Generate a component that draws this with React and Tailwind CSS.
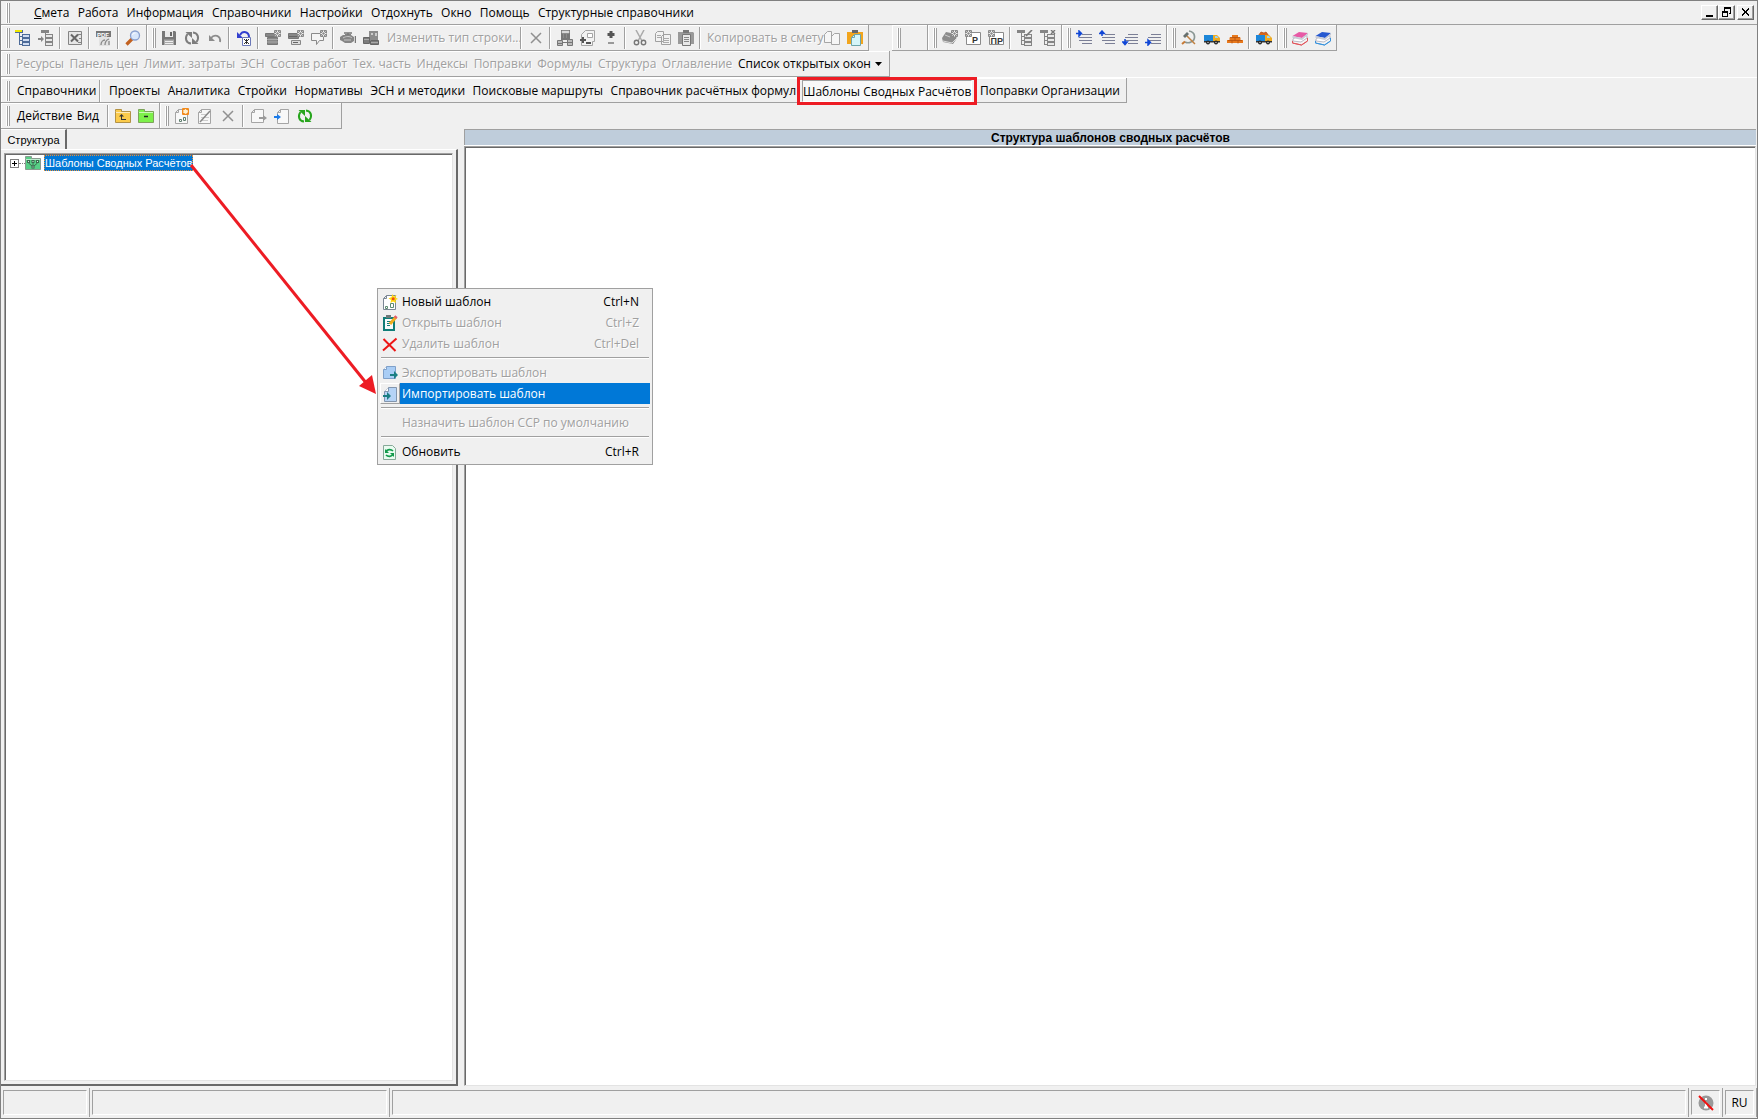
import { clsx } from "clsx";

const G = "#858585";

const Svg = ({ children, size = 16 }) => (
  <svg width={size} height={size} viewBox="0 0 16 16" fill="none" className="shrink-0">
    {children}
  </svg>
);

const TreeLines = ({ head = G, line = G, fill = "#e8e8e8", x = 0 }) => (
  <g shapeRendering="crispEdges">
    <rect x={x} y="0" width="8" height="3" fill={line} />
    <rect x={x} y="0" width="7" height="2" fill={head} />
    <path d={`M${x + 4}.5 3V14.500H8M${x + 4}.5 6.500H8M${x + 4}.5 10.500H8`} stroke={line} />
    <path d="M7.500 4.500h7v3h-7zM7.500 8.500h7v3h-7zM7.500 12.500h7v3h-7z" stroke={line} fill={fill} />
  </g>
);

const Gear = ({ x = 8, y = 0, color = "#8a8a8a" }) => (
  <g transform={`translate(${x} ${y})`}>
    <rect width="7" height="7" rx="1" fill={color} />
    <path d="M3.5 0.5v6M.5 3.5h6M1.5 1.5l4 4M5.5 1.5l-4 4" stroke="#fff" strokeWidth=".9" />
    <circle cx="3.5" cy="3.5" r="1.2" fill={color} />
  </g>
);

const Page = ({ stroke = "#a5a5a5", fill = "#f8f8f8" }) => (
  <path d="M1.500 4.500l3-3h9v14h-12zM1.500 4.500h3v-3" stroke={stroke} fill={fill} />
);

const Lines = () => (
  <path d="M6 4.500h10M3 7.500h13M3 10.500h13M6 13.500h10" stroke="#7b7f96" shapeRendering="crispEdges" />
);

const Books = ({ top, edge }) => (
  <>
    <path d="M0.5 11l6-4 9 1v3l-6 4-9-2z" fill="#f4f4f4" stroke={edge} />
    <path d="M1 9l6-4 8 1v2l-6 4-8-1z" fill="#fff" stroke="#b9b9c4" />
    <path d="M.5 6L7 2l9 1-6 5z" fill={top} />
    <path d="M.5 6l9.500 2L16 3v2l-6 5-9.500-2z" fill="#c9ccd6" />
    <path d="M.5 13l9 2 6-4" stroke={edge} />
  </>
);

const Truck = ({ load }) => (
  <>
    {load && <path d="M2 6l3-4 3 1 2-1 3 4z" fill="#d9661a" stroke="#a84812" strokeWidth=".7" />}
    <path d="M0 5h9v6H0z" fill="#1c86d8" />
    <path d="M9 5h4l3 3v4H9z" fill="#f0ab20" />
    <path d="M11 6h2l1.500 2H11z" fill="#9bd5f5" />
    <path d="M0 11h16v1.500H0z" fill="#333" />
    <circle cx="4" cy="12.500" r="2" fill="#222" />
    <circle cx="12" cy="12.500" r="2" fill="#222" />
    <circle cx="4" cy="12.500" r=".7" fill="#ddd" />
    <circle cx="12" cy="12.500" r=".7" fill="#ddd" />
  </>
);

const Cycle = ({ color }) => (
  <>
    <path d="M7 13.500C2 13 .5 8 3.500 4M9 2.500c5 .5 6.500 5.500 3.500 9.500" stroke={color} strokeWidth="2" />
    <path d="M1.500 2H8v6zM14.500 14H8V8z" fill={color} />
  </>
);

const Folder = ({ fill, edge, children }) => (
  <>
    <path d="M.5 3.500v-2h6v2h9v11H.5z" fill={fill} stroke={edge} />
    <path d="M1 4.500h14" stroke="#fff" opacity=".6" />
    {children}
  </>
);

const icons = {
  treeYellow: <TreeLines head="#efe900" line="#4d6b98" fill="#cfdcf2" />,
  treeInsert: (
    <>
      <TreeLines x={3} />
      <path d="M0 8h3V6l3 3-3 3v-2H0z" fill={G} />
    </>
  ),
  excel: (
    <>
      <path d="M1.500 1.500h13v13h-13z" fill="#e6e6e6" stroke={G} />
      <path d="M4 4.500l7 7M11 4.500l-7 7" stroke="#666" strokeWidth="2" />
      <path d="M11 4.500h3M12 8.500h2M11 12.500h3" stroke={G} />
    </>
  ),
  pdf: (
    <>
      <path d="M3 5h11v11H3z" fill="#e2e2e2" />
      <path d="M0 1h15v6H0z" fill="#777" />
      <text x="1" y="6.500" fontSize="6" fontWeight="700" fill="#fff" fontFamily="Liberation Sans, sans-serif">PDF</text>
      <path d="M5 15c0-3 2-5 4-5M9 15c0-3 1-5 4-6M13 15v-4" stroke="#888" strokeWidth="1.300" />
    </>
  ),
  search: (
    <>
      <path d="M1.500 14.500L7 9" stroke="#c2611f" strokeWidth="3.200" />
      <circle cx="10" cy="5.500" r="4.500" fill="#d8e6fb" stroke="#8aa0cf" strokeWidth="1.300" />
      <path d="M7.500 5c.5-1.500 1.500-2 3-2" stroke="#fff" />
    </>
  ),
  save: (
    <>
      <path d="M1 1h13l1 1v13H1z" fill="#777" />
      <path d="M4 1h8v6H4z" fill="#e9e9e9" />
      <path d="M9 2h2v4H9z" fill="#666" />
      <path d="M3 9.500h10V15H3z" fill="#aaa" />
      <path d="M4 11.500h8M4 13.500h8" stroke="#eee" />
    </>
  ),
  cycleGray: <Cycle color="#7d7d7d" />,
  cycleGreen: <Cycle color="#27a51d" />,
  undo: (
    <>
      <path d="M4 8c3-4 10-3 9 4" stroke="#8c8c8c" strokeWidth="1.800" />
      <path d="M2 5v6h6z" fill="#8c8c8c" />
    </>
  ),
  undoLock: (
    <>
      <path d="M4 5c3-5 9-3 9 2" stroke="#3340cf" strokeWidth="2" />
      <path d="M1 2v6h6z" fill="#3340cf" />
      <path d="M6.500 7.500h8v8h-8z" fill="#fff" stroke="#6b78b8" />
      <path d="M8 9l5 5M13 9l-5 5M10.500 9v5" stroke="#333" />
    </>
  ),
  rowsGear: (
    <>
      <path d="M.5 3.500h10v3H.5zM2.500 7.500h10v7h-10z" fill="#888" stroke="#777" />
      <path d="M2 9.500h11M2 12h11" stroke="#aaa" />
      <Gear x={9} />
    </>
  ),
  rowsGear2: (
    <>
      <path d="M.5 3.500h10v5H.5z" fill="#888" stroke="#777" />
      <path d="M3.500 10.500h9v4h-9z" fill="#ddd" stroke="#888" />
      <path d="M1 6.500h9M5 12.500h5" stroke="#666" />
      <Gear x={9} />
    </>
  ),
  chatGear: (
    <>
      <path d="M.5 3.500h12v7h-4l-3 4v-4h-5z" fill="#f4f4f4" stroke="#8a8a8a" />
      <Gear x={9} />
    </>
  ),
  engine: (
    <>
      <path d="M0 7l3-2h2V4h6v1l3 2v4l-3 2H5l-3-2-2-1z" fill="#858585" />
      <path d="M4 3h8M8 3v2M15.500 6v7" stroke="#777" strokeWidth="1.500" />
      <path d="M3 8c3-2 7-2 9 0M4 10h7" stroke="#c5c5c5" />
    </>
  ),
  blocks: (
    <>
      <path d="M6 1h9v9H6z" fill="#8b8b8b" />
      <path d="M.5 7.500h6v6h-6zM7.500 10.500h8v4h-8z" fill="#7c7c7c" stroke="#666" />
      <path d="M8 3h2v2H8zM12 3h2v3h-2z" fill="#ccc" />
      <path d="M1 9.500h5M8 12.500h7" stroke="#aaa" />
    </>
  ),
  cross: <path d="M3 3l10 10M13 3L3 13" stroke="#909090" strokeWidth="1.500" />,
  calc: (
    <>
      <path d="M4 0h9v10H4z" fill="#777" />
      <path d="M5 1h7v2H5zM6 5h1M9 5h1M6 7h1M9 7h1" fill="#ddd" stroke="#ccc" strokeWidth=".5" />
      <path d="M.5 10.500h5v5h-5zM10.500 9.500h5v6h-5z" fill="#bbb" stroke="#777" />
      <path d="M1 13.500h4M11 12.500h4M5 12.500h5" stroke="#777" />
    </>
  ),
  pagePlus: (
    <>
      <path d="M1.500 4.500l4-4h9v11h-2v4h-11z" fill="#f2f2f2" stroke="#a5a5a5" />
      <path d="M7.500 3.500h5v4h-5z" fill="#fff" stroke="#a5a5a5" />
      <path d="M0 10h6M3 7v6M6 13h5" stroke="#555" strokeWidth="2" />
    </>
  ),
  plusMinus: (
    <>
      <path d="M8 1v7M4.500 4.500h7" stroke="#555" strokeWidth="3" />
      <path d="M5 13h6" stroke="#999" strokeWidth="2" />
    </>
  ),
  scissors: (
    <>
      <path d="M4 0l6 11M12 0L6 11" stroke="#aaa" strokeWidth="1.500" />
      <circle cx="4.500" cy="12.500" r="2.200" stroke="#777" strokeWidth="1.400" />
      <circle cx="11.500" cy="12.500" r="2.200" stroke="#777" strokeWidth="1.400" />
    </>
  ),
  copy: (
    <>
      <path d="M.5 3.500l2-2h6v10h-8zM6.500 6.500l2-2h7v10h-9z" fill="#f2f2f2" stroke="#a0a0a0" />
      <path d="M2 5.500h4M2 7.500h4M8 8.500h6M8 10.500h6M8 12.500h6" stroke="#aaa" />
    </>
  ),
  copyLight: (
    <path d="M.5 4.500l3-3h4v11h-7zM7.500 6.500l3-3h5v11h-8z" fill="#f6f6f6" stroke="#a5a5a5" />
  ),
  pasteGray: (
    <>
      <path d="M0 2h15l1 1v11H0z" fill="#9a9a9a" />
      <path d="M4.500 4.500h8v11h-8z" fill="#e8e8e8" stroke="#777" />
      <path d="M5 0h6v3H5z" fill="#777" />
      <path d="M6 7.500h5M6 9.500h5M6 11.500h5" stroke="#888" />
    </>
  ),
  pasteColor: (
    <>
      <path d="M0 2h16v12H0z" fill="#f2a51d" />
      <path d="M5 0h6v3H5z" fill="#666" />
      <path d="M4.500 7.500l3-3h6v11h-9z" fill="#d5f5f8" stroke="#6ca5aa" />
      <path d="M4.500 7.500h3v-3" stroke="#6ca5aa" />
    </>
  ),
  stackGear: (
    <>
      <path d="M0 8l4-6 5 1 6 5-4 6-10-2z" fill="#8c8c8c" />
      <path d="M1 11l9 2 5-5" stroke="#ddd" />
      <path d="M3 5l5 2" stroke="#ccc" />
      <Gear x={9} />
    </>
  ),
  boxR: (
    <>
      <path d="M1.500 2.500h14v12h-14z" fill="#fff" stroke="#8b8b8b" />
      <Gear x={0} />
      <text x="7" y="13" fontSize="9" fontWeight="700" fill="#333" fontFamily="Liberation Sans, sans-serif">Р</text>
    </>
  ),
  boxPR: (
    <>
      <path d="M1.500 2.500h14v12h-14z" fill="#fff" stroke="#8b8b8b" />
      <Gear x={0} />
      <text x="2.500" y="13.500" fontSize="9" fontWeight="700" fill="#333" fontFamily="Liberation Sans, sans-serif">ПР</text>
    </>
  ),
  treeEdit: (
    <>
      <TreeLines />
      <path d="M9 6l6-6" stroke="#777" strokeWidth="1.600" />
    </>
  ),
  treeDelete: (
    <>
      <TreeLines />
      <path d="M11 0l4 4M15 0l-4 4" stroke="#777" strokeWidth="1.400" />
    </>
  ),
  lineRightUp: (
    <>
      <Lines />
      <path d="M0 3.500h3M3 1v5l2.500-2.500z" stroke="#1147d6" strokeWidth="1.500" fill="#1147d6" />
    </>
  ),
  lineUp: (
    <>
      <Lines />
      <path d="M3 6V3M.8 3.500L3 1l2.200 2.500z" stroke="#1147d6" strokeWidth="1.500" fill="#1147d6" />
    </>
  ),
  lineDown: (
    <>
      <Lines />
      <path d="M3 9v3M.8 12L3 14.500 5.200 12z" stroke="#1147d6" strokeWidth="1.500" fill="#1147d6" />
    </>
  ),
  lineRight: (
    <>
      <Lines />
      <path d="M0 12.500h3M3 10v5l2.500-2.500z" stroke="#1147d6" strokeWidth="1.500" fill="#1147d6" />
    </>
  ),
  hammer: (
    <>
      <path d="M8 1c7 1 7 9 2 11-2 1-4 1-6 0" stroke="#8a9794" strokeWidth="1.700" />
      <path d="M1 14l3-2.500" stroke="#c77a35" strokeWidth="2" />
      <path d="M5 5l9 9" stroke="#c08040" strokeWidth="1.500" />
      <path d="M2 6l4-4 2 2-4 4z" fill="#66706f" />
    </>
  ),
  truck: <Truck />,
  truckLoad: <Truck load />,
  bricks: (
    <>
      <path d="M5 5h6v3H5zM2.500 7.500h11v3h-11zM0 10h16v3H0z" fill="#e8791c" />
      <path d="M3 7.500h10M1 10.500h14M5 10.500v3M11 10.500v3M8 7.500v3" stroke="#b3500f" strokeWidth=".8" />
    </>
  ),
  booksPink: <Books top="#e75aa6" edge="#e0555c" />,
  booksBlue: <Books top="#2759d0" edge="#3a93dc" />,
  folderUp: (
    <Folder fill="#fbcb4b" edge="#b39245">
      <path d="M6 11.500h5M6.500 7v5" stroke="#333" />
      <path d="M4 8.500L6.500 6 9 8.500z" fill="#333" />
    </Folder>
  ),
  folderMinus: (
    <Folder fill="#7df04a" edge="#7da35a">
      <path d="M6 8.500h4" stroke="#222" strokeWidth="1.500" />
    </Folder>
  ),
  pageNew: (
    <>
      <Page />
      <path d="M5.500 11.500h2v2h-2zM9.500 9.500h2v3h-2z" stroke="#5f7f6f" />
      <rect x="8" y="0" width="7" height="7" rx="1" fill="#f18a1c" />
      <circle cx="11.500" cy="3.500" r="2" fill="#fff1c9" stroke="#fff" strokeDasharray="1 1" />
    </>
  ),
  pageEdit: (
    <>
      <Page />
      <path d="M4 6.500h6M4 9.500h8M4 12.500h7" stroke="#ccc" />
      <path d="M3 14L13 3" stroke="#888" strokeWidth="1.500" />
    </>
  ),
  pageOut: (
    <>
      <path d="M.5 4.500l3-3h9v13H.5zM.5 4.500h3v-3" stroke="#a5a5a5" fill="#f8f8f8" />
      <path d="M8 9h4V7l4 3-4 3v-2H8z" fill="#9a9a9a" />
    </>
  ),
  pageIn: (
    <>
      <path d="M3.500 4.500l3-3h8v14h-11zM3.500 4.500h3v-3" stroke="#a5a5a5" fill="#f8f8f8" />
      <path d="M0 8h3V6l4 3-4 3v-2H0z" fill="#1c7be8" />
    </>
  ),
  tree: (
    <Folder fill="#57cf86" edge="#8a9a90">
      <path d="M2 5h3v3H2zM6.500 5h3v3h-3zM11 5h3v3h-3zM6.500 10.500h3v3h-3z" fill="#3d6a50" />
      <path d="M3.500 8L7 11M12.500 8L9 11M8 8v3" stroke="#3d6a50" />
      <path d="M3 6h1v1H3zM7.500 6h1v1h-1zM12 6h1v1h-1zM7.500 11.500h1v1h-1z" fill="#c9f2d8" />
    </Folder>
  ),
  menuNew: (
    <>
      <Page stroke="#7b8794" fill="#fff" />
      <path d="M3.500 12.500h2v2h-2zM8.500 9.500h3v4h-3z" stroke="#5d8a70" />
      <path d="M10.500 0l1.300 2.500L14.500 1 13.500 3.500 16 5l-2.500 1 .5 3-3-1.500L8.500 9l.5-3L6.500 4.500 9.500 3z" fill="#ffd911" />
      <circle cx="11.200" cy="4.700" r="1.500" fill="#ee4a15" />
    </>
  ),
  menuOpen: (
    <>
      <path d="M1 2h12v14H1z" fill="#0f7d78" />
      <path d="M4 0h5v3H4z" fill="#6c7a7a" />
      <path d="M3 4h8v10H3z" fill="#f7fbfb" />
      <path d="M5 6.500h4M5 8.500h4M5 10.500h3" stroke="#0f7d78" />
      <path d="M8 9l6-7" stroke="#f1ae1d" strokeWidth="3" />
      <path d="M13 3l1.500-1.800" stroke="#e65c6c" strokeWidth="3" />
    </>
  ),
  menuDelete: <path d="M1.500 3l12 12M14.500 2.500L1 14.500" stroke="#ed1515" strokeWidth="2" />,
  menuExport: (
    <>
      <path d="M1.500 4.500l3-3h9v12h-12z" fill="#a9cdf5" stroke="#7fa0c9" />
      <path d="M1.500 4.500h3v-3" fill="#fff" stroke="#7fa0c9" />
      <path d="M8 9h4V6l4 4-4 4v-3H8z" fill="#1c7f83" />
    </>
  ),
  menuImport: (
    <>
      <path d="M2.500 5.500l4-4h8v14h-12z" fill="#b5d3f6" stroke="#8295ad" />
      <path d="M2.500 5.500h4v-4" fill="#fff" stroke="#8295ad" />
      <path d="M1 9h4V6l4 4-4 4v-3H1z" fill="#1c7f83" />
    </>
  ),
  menuRefresh: (
    <>
      <path d="M1.500 1.500h9l3 3v11h-12z" fill="#e9fbf0" stroke="#86a998" />
      <path d="M4 8c1-3 5-3 7-1M11 10c-1 3-5 3-7 1" stroke="#139a4b" strokeWidth="1.700" />
      <path d="M3 5v4h4zM12 13V9H8z" fill="#139a4b" />
    </>
  ),
};

const Grip = () => (
  <span className="mr-px flex h-5 w-1 shrink-0 justify-between">
    <span className="w-0.5 border-x border-l-white border-r-[#a0a0a0]" />
    <span className="w-0.5 border-x border-l-white border-r-[#a0a0a0]" />
  </span>
);

const Sep = () => (
  <span className="flex h-[22px] w-1.5 shrink-0 justify-center">
    <span className="w-0.5 border-x border-l-[#a0a0a0] border-r-white" />
  </span>
);

const Toolbar = ({ children, className }) => (
  <div
    role="toolbar"
    className={clsx(
      "flex h-full shrink-0 items-center border-r border-b border-[#a0a0a0] pr-0.5 pl-[5px] shadow-[inset_1px_1px_0_#fff]",
      className,
    )}
  >
    <Grip />
    {children}
  </div>
);

const IconButton = ({ name }) => (
  <button type="button" aria-label={name} className="flex h-[22px] w-[23px] shrink-0 items-center justify-center">
    <Svg>{icons[name]}</Svg>
  </button>
);

// "|" in the list stands for a separator
const IconSet = ({ items }) =>
  items.map((item, i) => (item === "|" ? <Sep key={i} /> : <IconButton key={i} name={item} />));

const disabledText = "text-[#a0a0a0] [text-shadow:1px_1px_0_#fff]";

const TextButton = ({ children, disabled, className }) => (
  <button
    type="button"
    disabled={disabled}
    className={clsx("shrink-0 whitespace-nowrap", disabled && disabledText, className)}
  >
    {children}
  </button>
);

const menuBar = ["Работа", "Информация", "Справочники", "Настройки", "Отдохнуть", "Окно", "Помощь", "Структурные справочники"];
const panels = ["Ресурсы", "Панель цен", "Лимит. затраты", "ЭСН", "Состав работ", "Тех. часть", "Индексы", "Поправки", "Формулы", "Структура", "Оглавление"];
const sections = ["Проекты", "Аналитика", "Стройки", "Нормативы", "ЭСН и методики", "Поисковые маршруты", "Справочник расчётных формул"];

const contextMenu = [
  { label: "Новый шаблон", keys: "Ctrl+N", icon: "menuNew" },
  { label: "Открыть шаблон", keys: "Ctrl+Z", icon: "menuOpen", disabled: true },
  { label: "Удалить шаблон", keys: "Ctrl+Del", icon: "menuDelete", disabled: true },
  null,
  { label: "Экспортировать шаблон", icon: "menuExport", disabled: true },
  { label: "Импортировать шаблон", icon: "menuImport", active: true },
  null,
  { label: "Назначить шаблон ССР по умолчанию", disabled: true },
  null,
  { label: "Обновить", keys: "Ctrl+R", icon: "menuRefresh" },
];

const WindowButton = ({ label, children, className }) => (
  <button
    type="button"
    aria-label={label}
    className={clsx(
      "flex h-[15px] w-[17px] items-center justify-center border border-t-white border-r-[#696969] border-b-[#696969] border-l-white shadow-[inset_-1px_-1px_0_#a0a0a0]",
      className,
    )}
  >
    <svg width="11" height="11" viewBox="0 0 11 11" fill="none" stroke="#000" shapeRendering="crispEdges">
      {children}
    </svg>
  </button>
);

const ContextMenu = () => (
  <div role="menu" className="absolute top-[287px] left-[376px] w-[276px] border border-[#a0a0a0] bg-[#f0f0f0] p-0.5">
    {contextMenu.map((item, i) =>
      item ? (
        <button
          key={i}
          type="button"
          role="menuitem"
          disabled={item.disabled}
          className={clsx("flex h-[21px] w-full items-center", item.disabled && disabledText)}
        >
          <span
            className={clsx(
              "flex h-[21px] w-5 shrink-0 items-center justify-center border",
              item.active ? "border-t-white border-r-[#a0a0a0] border-b-[#a0a0a0] border-l-white" : "border-transparent",
            )}
          >
            {item.icon && <Svg>{icons[item.icon]}</Svg>}
          </span>
          <span
            className={clsx(
              "flex h-full flex-1 items-center justify-between pr-[11px] pl-0.5 whitespace-nowrap",
              item.active && "bg-[#0078d7] text-white",
            )}
          >
            <span>{item.label}</span>
            <span>{item.keys}</span>
          </span>
        </button>
      ) : (
        <div key={i} role="separator" className="flex h-2 items-center px-px">
          <div className="h-0.5 w-full border-y border-t-[#a0a0a0] border-b-white" />
        </div>
      ),
    )}
  </div>
);

const StatusCell = ({ children, className }) => (
  <div className={clsx("border-r border-[#a0a0a0] px-0.5 py-0.5", className)}>
    <div className="flex h-full items-center justify-center border border-t-[#a0a0a0] border-r-white border-b-white border-l-[#a0a0a0]">
      {children}
    </div>
  </div>
);

export default function App() {
  return (
    <div className="relative flex h-screen w-full flex-col overflow-hidden border border-[#808080] bg-[#f0f0f0] font-['Open_Sans',sans-serif] text-[12px] leading-4 text-black">
      <header className="shrink-0">
        <div className="flex h-6 items-center border-b border-[#a0a0a0] pr-[3px] pl-[5px]">
          <Grip />
          <nav className="flex w-[683px] shrink-0 justify-between pl-[23px]">
            <TextButton>
              <u>С</u>мета
            </TextButton>
            {menuBar.map((item) => (
              <TextButton key={item}>{item}</TextButton>
            ))}
          </nav>
          <div className="ml-auto flex">
            <WindowButton label="Свернуть">
              <path d="M2 9h7" strokeWidth="2" />
            </WindowButton>
            <WindowButton label="Восстановить">
              <path d="M3 1h7M1 5h6" strokeWidth="2" />
              <path d="M3.500 2v2M9.500 2v4.500H8M1.500 5v4.500h5V5" />
            </WindowButton>
            <WindowButton label="Закрыть" className="ml-0.5">
              <path d="M2 1.500l7 7M9 1.500l-7 7" strokeWidth="2" />
            </WindowButton>
          </div>
        </div>

        <div className="flex h-[26px]">
          <Toolbar>
            <IconSet items={["treeYellow", "treeInsert", "|", "excel", "|", "pdf", "|", "search"]} />
          </Toolbar>
          <Toolbar>
            <IconSet items={["save", "cycleGray", "undo", "|", "undoLock", "|", "rowsGear", "rowsGear2", "chatGear", "|", "engine", "blocks"]} />
            <TextButton disabled className="w-[136px] pl-[5px] text-left">
              Изменить тип строки...
            </TextButton>
            <IconSet items={["|", "cross", "|", "calc", "pagePlus", "plusMinus", "|", "scissors", "copy", "pasteGray", "|"]} />
            <TextButton disabled className="w-[117px] pl-1 text-left">
              Копировать в смету
            </TextButton>
            <IconSet items={["copyLight", "pasteColor"]} />
          </Toolbar>
          <Toolbar className="ml-[23px] w-9" />
          <Toolbar>
            <IconSet items={["stackGear", "boxR", "boxPR", "|", "treeEdit", "treeDelete"]} />
          </Toolbar>
          <Toolbar>
            <IconSet items={["lineRightUp", "lineUp", "lineDown", "lineRight"]} />
          </Toolbar>
          <Toolbar>
            <IconSet items={["hammer", "truck", "bricks", "|", "truckLoad"]} />
          </Toolbar>
          <Toolbar>
            <IconSet items={["booksPink", "booksBlue"]} />
          </Toolbar>
        </div>

        <div className="flex h-[26px]">
          <Toolbar className="w-[889px]">
            <div className="flex flex-1 items-center justify-between px-[5px]">
              {panels.map((item) => (
                <TextButton key={item} disabled>
                  {item}
                </TextButton>
              ))}
              <TextButton className="flex items-center gap-1">
                Список открытых окон
                <svg width="7" height="4" viewBox="0 0 7 4">
                  <path d="M0 0h7L3.500 4z" />
                </svg>
              </TextButton>
            </div>
          </Toolbar>
        </div>

        <div className="flex h-[26px] border-t border-white">
          <Toolbar className="w-[1126px] pt-0.5">
            <TextButton className="w-[86px] pl-1.5 text-left">Справочники</TextButton>
            <Sep />
            <div className="flex w-[699px] shrink-0 justify-between px-1.5">
              {sections.map((item) => (
                <TextButton key={item}>{item}</TextButton>
              ))}
            </div>
            <button
              type="button"
              aria-pressed="true"
              className="relative h-[22px] w-[170px] shrink-0 border border-t-[#a0a0a0] border-r-white border-b-white border-l-[#a0a0a0] bg-[#f8f8f8] pt-px whitespace-nowrap"
            >
              Шаблоны Сводных Расчётов
              <span className="absolute -inset-x-1.5 -inset-y-1 border-3 border-[#ed1c24]" />
            </button>
            <div className="flex flex-1 justify-between pr-1 pl-2">
              <TextButton>Поправки</TextButton>
              <TextButton>Организации</TextButton>
            </div>
          </Toolbar>
        </div>

        <div className="flex h-[26px]">
          <Toolbar className="w-[159px]">
            <div className="flex flex-1 justify-between px-1.5">
              <TextButton>Действие</TextButton>
              <TextButton>Вид</TextButton>
            </div>
            <IconSet items={["|", "folderUp", "folderMinus"]} />
          </Toolbar>
          <Toolbar className="w-[182px]">
            <IconSet items={["pageNew", "pageEdit", "cross"]} />
            <span className="flex px-px">
              <Sep />
            </span>
            <IconSet items={["pageOut", "pageIn", "cycleGreen"]} />
          </Toolbar>
        </div>
      </header>

      <main className="flex min-h-0 flex-1">
        <aside className="flex w-[457px] shrink-0 flex-col font-['Liberation_Sans',sans-serif]">
          <button
            type="button"
            className="h-5 w-[66px] border-t border-r-2 border-t-white border-r-[#696969] pl-px text-[11px]"
          >
            Структура
          </button>
          <div className="flex flex-1 border-t border-r-2 border-b-2 border-t-white border-r-[#696969] border-b-[#696969] p-[3px]">
            <ul className="flex-1 border border-t-[#a0a0a0] border-r-[#e3e3e3] border-b-[#e3e3e3] border-l-[#a0a0a0] bg-white pt-px pl-[5px] shadow-[inset_1px_1px_0_#696969]">
              <li className="flex h-4 items-center">
                <button
                  type="button"
                  aria-label="Развернуть"
                  className="flex size-[9px] items-center justify-center border border-[#808080] bg-white"
                >
                  <svg width="5" height="5" viewBox="0 0 5 5" stroke="#000">
                    <path d="M0 2.500h5M2.500 0v5" />
                  </svg>
                </button>
                <span className="w-1.5 border-t border-dotted border-[#808080]" />
                <Svg>{icons.tree}</Svg>
                <span className="ml-[3px] border border-dotted border-[#e8903a] bg-[#0078d7] text-[11px] leading-[14px] whitespace-nowrap text-white">
                  Шаблоны Сводных Расчётов
                </span>
              </li>
            </ul>
          </div>
        </aside>

        <section className="ml-1.5 flex flex-1 flex-col pr-px">
          <h1 className="h-4 border-t border-l border-[#a0a0a0] bg-[#bfcddb] text-center font-['Liberation_Sans',sans-serif] text-[12px] font-bold">
            Структура шаблонов сводных расчётов
          </h1>
          <div className="flex flex-1 border-t border-white">
            <div className="flex-1 border border-t-[#a0a0a0] border-r-[#e3e3e3] border-b-[#e3e3e3] border-l-[#a0a0a0] bg-white shadow-[inset_1px_1px_0_#696969]" />
          </div>
        </section>
      </main>

      <footer className="flex h-8 shrink-0 pt-0.5 pb-px">
        <StatusCell className="w-[89px]" />
        <StatusCell className="w-[300px]" />
        <StatusCell className="flex-1" />
        <StatusCell className="w-[34px]">
          <Svg>
            <circle cx="8" cy="8" r="7.500" fill="#999" />
            <path d="M8 3v2M8 7v5M6 12.500h4" stroke="#fff" strokeWidth="2" />
            <path d="M1 1l14 14" stroke="#f01010" strokeWidth="2" />
          </Svg>
        </StatusCell>
        <StatusCell className="w-[34px]">RU</StatusCell>
      </footer>

      <svg
        width="200"
        height="250"
        viewBox="0 0 200 250"
        className="pointer-events-none absolute top-[154px] left-[184px]"
      >
        <path d="M6 10L182 229" stroke="#ed1c24" strokeWidth="3" />
        <path d="M191 239l-17-8 13-11z" fill="#ed1c24" />
      </svg>

      <ContextMenu />
    </div>
  );
}
